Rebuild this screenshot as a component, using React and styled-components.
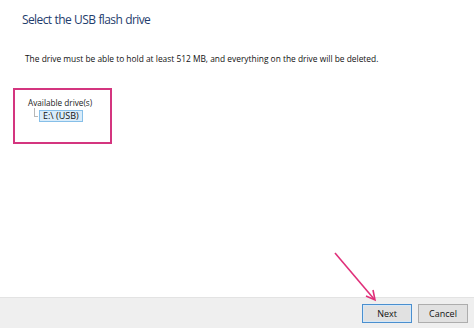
import React from "react";
import styled, { createGlobalStyle } from "styled-components";

const GlobalStyle = createGlobalStyle`
  html, body {
    margin: 0;
    padding: 0;
    background: #fff;
  }
  body {
    font-family: "Open Sans", "Noto Sans", "Liberation Sans", sans-serif;
  }
`;

const Window = styled.div`
  position: relative;
  width: 474px;
  height: 328px;
  display: flex;
  flex-direction: column;
  background: #fff;
  overflow: hidden;
`;

const Content = styled.div`
  flex: 1;
  padding: 11px 0 0 22px;
  display: flex;
  flex-direction: column;
`;

const Title = styled.h1`
  margin: 0;
  font-size: 12px;
  font-weight: 400;
  color: #1f3d6d;
  line-height: 18px;
  letter-spacing: -0.6px;
  word-spacing: 0.5px;
`;

const Description = styled.p`
  margin: 24px 0 0 3px;
  font-size: 8.4px;
  line-height: 12px;
  color: #111;
`;

const HighlightBox = styled.div`
  margin: 23px 0 0 -9px;
  width: 82px;
  height: 45px;
  border: 2px solid #d4357f;
  padding: 7px 0 0 13px;
  box-sizing: content-box;
  display: flex;
  flex-direction: column;
`;

const TreeLabel = styled.div`
  font-size: 8.2px;
  line-height: 11px;
  color: #222;
`;

const TreeRow = styled.div`
  display: flex;
  align-items: flex-start;
  margin-left: 6px;
`;

const Branch = styled.div`
  width: 3px;
  height: 8px;
  border-left: 1px solid #b8b8b8;
  border-bottom: 1px solid #b8b8b8;
  margin-right: 1px;
`;

const DriveItem = styled.div`
  font-size: 9px;
  line-height: 10px;
  padding: 0 3px;
  background: #d9ecfa;
  border: 1px solid #86bfe8;
  color: #111;
  margin-top: 2px;
`;

const Footer = styled.div`
  height: 30px;
  border-top: 1px solid #e3e3e3;
  background: #efefef;
  display: flex;
  justify-content: flex-end;
  align-items: center;
  gap: 6px;
  padding-right: 6px;
`;

const Button = styled.button`
  width: 50px;
  height: 19px;
  padding: 0;
  font-family: inherit;
  font-size: 9px;
  color: #111;
  background: #e1e1e1;
  border: 1px solid ${(p) => (p.$primary ? "#4a8fcf" : "#adadad")};
  box-shadow: ${(p) => (p.$primary ? "inset 0 0 0 1px #d6e8f7" : "none")};
  margin-top: 1px;
`;

const Arrow = styled.svg`
  position: absolute;
  left: 330px;
  top: 248px;
  overflow: visible;
`;

export default function App() {
  return (
    <>
      <GlobalStyle />
      <Window>
        <Content>
          <Title>Select the USB flash drive</Title>
          <Description>
            The drive must be able to hold at least 512 MB, and everything on the drive will be deleted.
          </Description>
          <HighlightBox>
            <TreeLabel>Available drive(s)</TreeLabel>
            <TreeRow>
              <Branch />
              <DriveItem>E:\ (USB)</DriveItem>
            </TreeRow>
          </HighlightBox>
        </Content>
        <Footer>
          <Button $primary>Next</Button>
          <Button>Cancel</Button>
        </Footer>
        <Arrow width="50" height="56" viewBox="0 0 50 56">
          <line x1="5" y1="5" x2="44" y2="51" stroke="#e0307a" strokeWidth="1.6" />
          <path d="M36 48 L45 52 L43 42" fill="none" stroke="#e0307a" strokeWidth="1.6" />
        </Arrow>
      </Window>
    </>
  );
}
